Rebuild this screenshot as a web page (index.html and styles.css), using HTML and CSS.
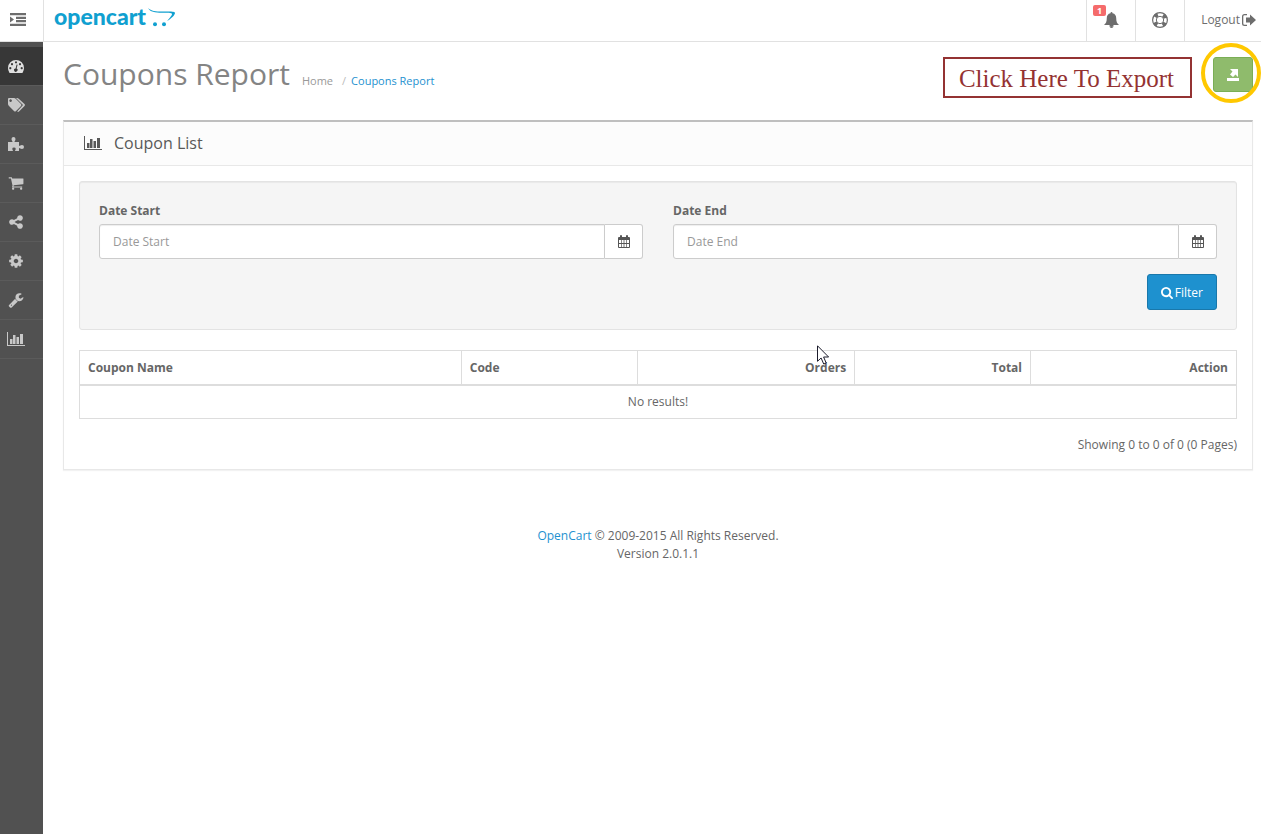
FILE: index.html
```html
<!DOCTYPE html>
<html lang="en">
<head>
<meta charset="utf-8">
<title>Coupons Report</title>
<link rel="stylesheet" href="styles.css">
</head>
<body>
<svg class="defs" aria-hidden="true">
  <symbol id="chart" viewBox="0 0 19 14"><path d="M0 0h1v13h17v1H0zM3 7h2.500v5H3zM6 3h2.500v9H6zM9.500 5H12v7H9.500zM13 2h3v10h-3z"/></symbol>
  <symbol id="calendar" viewBox="0 0 12 13"><path fill-rule="evenodd" d="M1 2h1V1q0-1 1-1t1 1v1h4V1q0-1 1-1t1 1v1h1q1 0 1 1v9q0 1-1 1H1q-1 0-1-1V3q0-1 1-1zM1 5v3h2.300V5zm3 0v3h1.600V5zm2.400 0v3H8V5zm2.300 0v3H11V5zM1 9v3h2.300V9zm3 0v3h1.600V9zm2.400 0v3H8V9zm2.300 0v3H11V9z"/></symbol>
</svg>

<header class="topbar">
  <button class="menu-toggle" type="button" aria-label="Toggle menu">
    <svg width="16" height="13" viewBox="0 0 16 13"><path d="M0 0h16v2.300H0zM6 3.700h10V6H6zM6 7h10v2.300H6zM0 10.700h16V13H0zM0 3.500l4 3-4 3z"/></svg>
  </button>
  <a class="logo" href="#" aria-label="opencart">
    <span>opencart</span>
    <svg width="28" height="20" viewBox="0 0 28 20"><path d="M0 0c3 3 8 3.500 14 3.500 7 0 13-.5 13 1.500 0 2-4 6-8 8 2-2 5-5.500 5-7 0-1.500-5-1-10-1.200C7 4.500 2 4 0 0z"/><circle cx="7" cy="16.300" r="2"/><circle cx="16" cy="16.300" r="2"/></svg>
  </a>
  <nav class="top-actions">
    <a class="alerts" href="#" aria-label="Notifications">
      <span class="badge">1</span>
      <svg width="15" height="16" viewBox="0 0 15 16"><path d="M7.500 0q1 0 1 1.200C11 1.700 12.200 3.600 12.200 6c0 4 1 5.500 2.800 7H9.500a2 2 0 0 1-4 0H0c1.800-1.500 2.800-3 2.800-7 0-2.400 1.200-4.300 3.700-4.800Q6.500 0 7.500 0z"/><path d="M5.500 13a2 2 0 0 0 4 0v1a2 2 0 0 1-4 0z"/></svg>
    </a>
    <a class="help" href="#" aria-label="Help">
      <svg width="16" height="16" viewBox="0 0 16 16"><circle cx="8" cy="8" r="7.400" fill="none" stroke="currentColor" stroke-width="1.200"/><circle cx="8" cy="8" r="3.700" fill="none" stroke="currentColor" stroke-width="1"/><g fill="none" stroke="currentColor" stroke-width="4"><circle cx="8" cy="8" r="5.800" stroke-dasharray="3.600 5.510" transform="rotate(27 8 8)"/></g></svg>
    </a>
    <a class="logout" href="#">Logout
      <svg width="14" height="12" viewBox="0 0 14 12"><path d="M5 0v1.300H2.500Q1.300 1.300 1.300 2.500v7q0 1.200 1.200 1.200H5V12H2.500Q0 12 0 9.500v-7Q0 0 2.500 0zM4 3.500h4V.5L14 6l-6 5.500v-3H4z"/></svg>
    </a>
  </nav>
</header>

<div class="layout">
  <nav class="sidebar">
    <a class="active" href="#" aria-label="Dashboard"><svg width="16" height="13" viewBox="0 0 16 13"><path fill-rule="evenodd" d="M8 0a8 8 0 0 1 8 8q0 2.500-1.300 4.500-.2.500-.8.500H2.100q-.6 0-.8-.5Q0 10.500 0 8a8 8 0 0 1 8-8zM2.300 7a1.100 1.100 0 1 0 .01 0zm1.700-4a1.100 1.100 0 1 0 .01 0zM8 1.200a1.100 1.100 0 1 0 .01 0zM12 3a1.100 1.100 0 1 0 .01 0zm1.700 4a1.100 1.100 0 1 0 .01 0zM8.600 4.500l-1 3.900a1.700 1.700 0 1 0 1 .2l1-3.900z"/></svg></a>
    <a href="#" aria-label="Catalog"><svg width="17" height="14" viewBox="0 0 17 14"><path fill-rule="evenodd" d="M1 0h5q1 0 2 .9l5 5q.9 1.100 0 2l-5 5q-1 1-2 0L1 8Q0 7 0 6V1q0-1 1-1zm1.600 1.300a1.300 1.300 0 1 0 .01 0z"/><path d="M8 0h1q1 0 2 .9l5.500 5q.9 1.100 0 2L11 13.500q-1 .8-1.800 0L15 7z"/></svg></a>
    <a href="#" aria-label="Extensions"><svg width="16" height="14" viewBox="0 0 16 14"><path d="M0 5h4.500C4.500 4 3.500 3.500 3.500 2q0-2 2-2t2 2c0 1.500-1 2-1 3H11v4c1 0 1.500-1 3-1q2 0 2 2t-2 2c-1.500 0-2-1-3-1v3H7c0-1 .7-1.200.7-2.300q0-1.200-1.700-1.200t-1.700 1.200C4.300 12.800 5 13 5 14H0z"/></svg></a>
    <a href="#" aria-label="Sales"><svg width="16" height="16" viewBox="0 0 1792 1792"><path d="M704 1536q0 52-38 90t-90 38-90-38-38-90 38-90 90-38 90 38 38 90zm896 0q0 52-38 90t-90 38-90-38-38-90 38-90 90-38 90 38 38 90zm128-1088v512q0 24-16.500 42.500t-40.500 21.500l-1044 122q13 60 13 70 0 16-24 64h920q26 0 45 19t19 45-19 45-45 19h-1024q-26 0-45-19t-19-45q0-11 8-31.500t16-36 21.500-40 15.500-29.500l-177-823h-204q-26 0-45-19t-19-45 19-45 45-19h256q16 0 28.500 6.500t19.500 15.500 13 24.500 8 26 5.500 29.500 4.500 26h1201q26 0 45 19t19 45z"/></svg></a>
    <a href="#" aria-label="Marketing"><svg width="16" height="16" viewBox="0 0 1792 1792"><path d="M1344 1024q133 0 226.500 93.500t93.500 226.500-93.500 226.500-226.500 93.500-226.500-93.500-93.500-226.500q0-12 2-34l-360-180q-92 86-218 86-133 0-226.500-93.500t-93.500-226.500 93.500-226.500 226.500-93.500q126 0 218 86l360-180q-2-22-2-34 0-133 93.500-226.500t226.500-93.500 226.500 93.500 93.500 226.500-93.500 226.500-226.500 93.500q-126 0-218-86l-360 180q2 22 2 34t-2 34l360 180q92-86 218-86z"/></svg></a>
    <a href="#" aria-label="System"><svg width="16" height="16" viewBox="0 0 1792 1792"><path d="M1152 896q0-106-75-181t-181-75-181 75-75 181 75 181 181 75 181-75 75-181zm512-109v222q0 12-8 23t-20 13l-185 28q-19 54-39 91 35 50 107 138 10 12 10 25t-9 23q-27 37-99 108t-94 71q-12 0-26-9l-138-108q-44 23-91 38-16 136-29 186-7 28-36 28h-222q-14 0-24.500-8.500t-11.500-21.500l-28-184q-49-16-90-37l-141 107q-10 9-25 9-14 0-25-11-126-114-165-168-7-10-7-23 0-12 8-23 15-21 51-66.500t54-70.500q-27-50-41-99l-183-27q-13-2-21-12.500t-8-23.500v-222q0-12 8-23t19-13l186-28q14-46 39-92-40-57-107-138-10-12-10-24 0-10 9-23 26-36 98.500-107.500t94.500-71.500q13 0 26 10l138 107q44-23 91-38 16-136 29-186 7-28 36-28h222q14 0 24.500 8.500t11.500 21.500l28 184q49 16 90 37l142-107q9-9 24-9 13 0 25 10 129 119 165 170 7 8 7 22 0 12-8 23-15 21-51 66.500t-54 70.500q26 50 41 98l183 28q13 2 21 12.500t8 23.500z"/></svg></a>
    <a href="#" aria-label="Tools"><svg width="16" height="16" viewBox="0 0 1792 1792"><path d="M448 1472q0-26-19-45t-45-19-45 19-19 45 19 45 45 19 45-19 19-45zm644-420l-682 682q-37 37-90 37-52 0-91-37l-106-108q-38-36-38-90 0-53 38-91l681-681q39 98 114.500 173.500t173.500 114.500zm634-435q0 39-23 106-47 134-164.500 217.500t-258.500 83.500q-185 0-316.500-131.500t-131.500-316.500 131.500-316.500 316.500-131.500q58 0 121.500 16.500t107.500 46.500q16 11 16 28t-16 28l-293 169v224l193 107q5-3 79-48.500t135.500-81 70.500-35.500q15 0 23.500 10t8.500 25z"/></svg></a>
    <a class="reports" href="#" aria-label="Reports"><svg width="19" height="14"><use href="#chart"/></svg></a>
  </nav>

  <div class="content">
    <div class="page-header">
      <h1>Coupons Report</h1>
      <ul class="breadcrumb">
        <li><a href="#">Home</a></li>
        <li><a class="current" href="#">Coupons Report</a></li>
      </ul>
      <div class="callout">Click Here To Export</div>
      <div class="export-wrap">
        <button class="export" type="button" aria-label="Export">
          <svg width="12" height="13" viewBox="0 0 12 13"><path d="M0 10h12v3H0zM3 1h8v8L8.500 6.500 6 9 3 6.500 5.500 3.500z"/></svg>
        </button>
        <span class="ring"></span>
      </div>
    </div>

    <main class="panel">
      <div class="panel-heading">
        <svg width="19" height="14"><use href="#chart"/></svg>
        <h2>Coupon List</h2>
      </div>
      <div class="panel-body">
        <form class="filters">
          <div class="fields">
            <div class="field">
              <label for="date-start">Date Start</label>
              <div class="input-group">
                <input id="date-start" type="text" placeholder="Date Start">
                <button type="button" aria-label="Pick start date"><svg width="12" height="13"><use href="#calendar"/></svg></button>
              </div>
            </div>
            <div class="field">
              <label for="date-end">Date End</label>
              <div class="input-group">
                <input id="date-end" type="text" placeholder="Date End">
                <button type="button" aria-label="Pick end date"><svg width="12" height="13"><use href="#calendar"/></svg></button>
              </div>
            </div>
          </div>
          <button class="filter-btn" type="button">
            <svg width="12" height="12" viewBox="64 128 1664 1664"><path d="M1216 832q0-185-131.500-316.500t-316.500-131.500-316.500 131.500-131.500 316.500 131.500 316.500 316.500 131.500 316.500-131.500 131.500-316.500zm512 832q0 52-38 90t-90 38q-54 0-90-38l-343-342q-179 124-399 124-143 0-273.500-55.500t-225-150-150-225-55.500-273.500 55.500-273.500 150-225 225-150 273.500-55.500 273.500 55.500 225 150 150 225 55.500 273.500q0 220-124 399l343 343q37 37 37 90z"/></svg>
            Filter
          </button>
        </form>

        <table>
          <colgroup><col class="c-name"><col class="c-code"><col class="c-orders"><col class="c-total"><col></colgroup>
          <thead>
            <tr>
              <th>Coupon Name</th>
              <th>Code</th>
              <th class="num pointed">Orders
                <svg class="pointer" width="13" height="20" viewBox="0 0 13 20" aria-hidden="true"><path d="M.5.800v15.500l3.600-3.300 2.600 6 2.500-1-2.600-6h5z" fill="#fff" stroke="#1c1c2c"/></svg>
              </th>
              <th class="num">Total</th>
              <th class="num">Action</th>
            </tr>
          </thead>
          <tbody>
            <tr><td colspan="5">No results!</td></tr>
          </tbody>
        </table>
        <p class="summary">Showing 0 to 0 of 0 (0 Pages)</p>
      </div>
    </main>

    <footer><a href="#">OpenCart</a> © 2009-2015 All Rights Reserved.<br>Version 2.0.1.1</footer>
  </div>
</div>
</body>
</html>
```

FILE: styles.css
```css
* { box-sizing: border-box; }

body {
  margin: 0;
  min-height: 100vh;
  display: flex;
  flex-direction: column;
  background: #fff;
  color: #666;
  font: 12px/18px "Open Sans", sans-serif;
}

a { color: #1e91cf; text-decoration: none; }
button, input { font: inherit; color: inherit; }
button { cursor: pointer; padding: 0; }
svg { fill: currentColor; flex: none; display: block; }
.defs { position: absolute; width: 0; height: 0; }

.topbar {
  display: flex;
  height: 42px;
  border-bottom: 1px solid #e1e1e1;
}
.menu-toggle {
  width: 44px;
  padding: 0 0 3px 10px;
  background: none;
  border: 0;
  border-right: 1px solid #e1e1e1;
  color: #6d6d6d;
}
.logo {
  display: flex;
  align-items: flex-start;
  gap: 2px;
  padding: 4px 0 0 10px;
  color: #10a0d0;
  font: 900 23px/24px Lato, sans-serif;
}
.logo svg { margin-top: 4px; }
.top-actions { display: flex; margin-left: auto; }
.top-actions a {
  display: flex;
  align-items: center;
  padding-bottom: 2px;
  border-left: 1px solid #e1e1e1;
  color: #6d6d6d;
}
.top-actions .alerts {
  position: relative;
  width: 49px;
  padding-left: 17px;
}
.badge {
  position: absolute;
  left: 6px;
  top: 5px;
  width: 13px;
  height: 11px;
  border-radius: 2px;
  background: #f56b6b;
  color: #fff;
  font-size: 9px;
  font-weight: 700;
  line-height: 11px;
  text-align: center;
}
.top-actions .help { width: 49px; padding-left: 16px; }
.top-actions .logout { gap: 2px; padding-left: 16px; padding-right: 5px; }

.layout { display: flex; flex: 1; }
.sidebar {
  width: 43px;
  padding-top: 5px;
  background: #515151;
}
.sidebar a {
  display: flex;
  align-items: center;
  height: 39px;
  padding-left: 8px;
  border-bottom: 1px solid #5b5b5b;
  color: #c8c8c8;
}
.sidebar .active { background: #373737; color: #e0e0e0; }
.sidebar .reports { padding-left: 7px; }

.content { flex: 1; padding: 0 8px 0 20px; }
.page-header {
  display: flex;
  align-items: flex-start;
  height: 78px;
  padding-top: 15px;
}
h1 {
  margin: 0;
  color: #848484;
  font-size: 30px;
  font-weight: 400;
  line-height: 34px;
}
.breadcrumb {
  display: flex;
  margin: 0 0 0 12px;
  padding: 15px 0 0;
  list-style: none;
  font-size: 11px;
}
.breadcrumb a { color: #999; }
.breadcrumb .current { color: #1e91cf; }
.breadcrumb li + li::before { content: "/"; padding: 0 5px 0 9px; color: #bbb; }
.callout {
  margin-left: auto;
  padding: 2px 16px 0 14px;
  border: 2px solid #943232;
  color: #943232;
  font: 25px/35px "Liberation Serif", serif;
}
.export-wrap { position: relative; margin-left: 21px; }
.export {
  display: flex;
  align-items: center;
  justify-content: center;
  width: 40px;
  height: 35px;
  border: 1px solid #7aae55;
  border-radius: 3px;
  background: #8fbb6c;
  color: #fff;
}
.ring {
  position: absolute;
  left: -12px;
  top: -14px;
  width: 60px;
  height: 60px;
  border: 4px solid #ffc800;
  border-radius: 50%;
  pointer-events: none;
}

.panel {
  border: 1px solid #e8e8e8;
  border-top: 2px solid #bfbfbf;
  box-shadow: 0 1px 1px rgba(0, 0, 0, 0.05);
}
.panel-heading {
  display: flex;
  align-items: center;
  gap: 11px;
  height: 44px;
  padding: 0 20px 1px;
  border-bottom: 1px solid #e8e8e8;
  background: #fcfcfc;
  color: #595959;
}
h2 { margin: 0; font-size: 16px; font-weight: 400; line-height: 22px; }
.panel-body { padding: 15px; }

.filters {
  display: flex;
  flex-direction: column;
  padding: 20px 19px 19px;
  margin-bottom: 20px;
  border: 1px solid #e3e3e3;
  border-radius: 3px;
  background: #f5f5f5;
  box-shadow: inset 0 1px 1px rgba(0, 0, 0, 0.05);
}
.fields { display: grid; grid-template-columns: 1fr 1fr; gap: 30px; }
.field label { display: block; margin-bottom: 4px; font-weight: 700; }
.input-group { display: flex; height: 35px; }
.input-group input {
  flex: 1;
  min-width: 0;
  padding: 0 13px;
  border: 1px solid #ccc;
  border-radius: 3px 0 0 3px;
  background: #fff;
  box-shadow: inset 0 1px 1px rgba(0, 0, 0, 0.07);
}
.input-group input::placeholder { color: #999; opacity: 1; }
.input-group button {
  width: 38px;
  padding-left: 13px;
  border: 1px solid #ccc;
  border-left: 0;
  border-radius: 0 3px 3px 0;
  background: #fff;
  color: #555;
}
.filter-btn {
  display: flex;
  align-items: center;
  align-self: flex-end;
  gap: 2px;
  height: 36px;
  margin-top: 15px;
  padding: 2px 13px 0;
  border: 1px solid #1978ab;
  border-radius: 3px;
  background: #1e91cf;
  color: #fff;
}

table {
  width: 100%;
  table-layout: fixed;
  border-collapse: collapse;
}
.c-name { width: 33%; }
.c-code { width: 15.200%; }
.c-orders { width: 18.800%; }
.c-total { width: 15.200%; }
th, td { padding: 8px; border: 1px solid #ddd; }
th { text-align: left; font-weight: 700; border-bottom-width: 2px; line-height: 17px; }
td { text-align: center; line-height: 16px; }
.num { text-align: right; }
.pointed { position: relative; }
.pointer { position: absolute; right: 24px; top: -6px; }
.summary { margin: 17px 0 0; text-align: right; }

footer { padding: 57px 0 40px; text-align: center; }
```
